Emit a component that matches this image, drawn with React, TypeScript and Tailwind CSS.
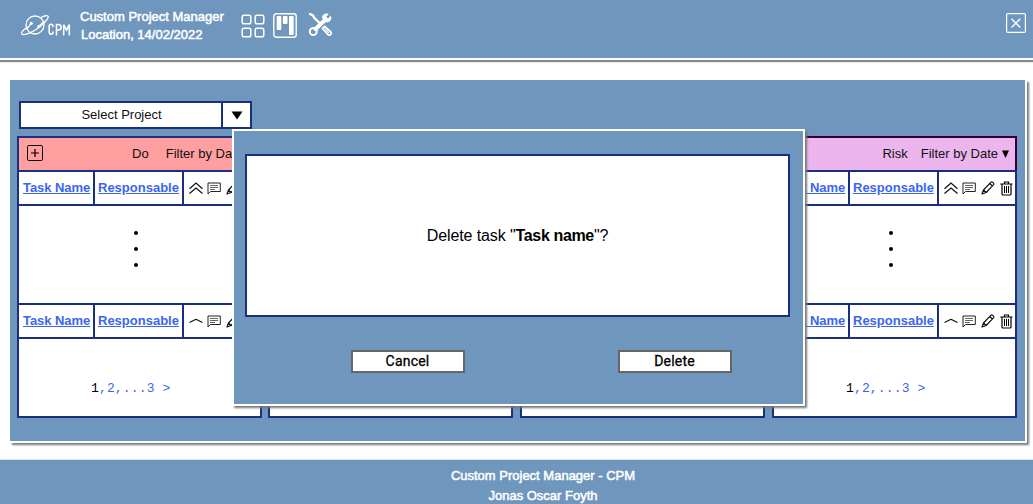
import React from "react";

function Logo() {
  return (
    <svg width="52" height="24" viewBox="0 0 52 24" fill="none" stroke="white" strokeWidth="1.3" strokeLinecap="round">
      <circle cx="15" cy="12" r="9" />
      <path d="M21 4.500 C24 2.800 28 1.800 28.300 3.700 C28.600 6 22.500 12 16.500 16.200 C10.500 20.400 2.500 23 1.700 20.800 C1.200 19.200 3.500 16.800 6.500 14.700" />
      <path d="M7 15.500 L11 10.700 M19.300 13 L24 8.500" />
      <circle cx="11.300" cy="10.300" r="1.600" fill="white" stroke="none" />
      <circle cx="19" cy="13.300" r="1.600" fill="white" stroke="none" />
      <path d="M33 13.500 C33 10.500 29.200 10.500 29.200 13.500 V19 C29.200 22 33 22 33 19 M36.500 21.700 V11.500 H38.500 C42 11.500 42 17 38.500 17 H36.500 M43.700 21.700 V11.700 L46.500 17 L49.300 11.700 V21.700" strokeWidth="1.600" />
    </svg>
  );
}

function GridIcon() {
  return (
    <svg width="24" height="24" viewBox="0 0 24 24" fill="none" stroke="white" strokeWidth="1.500">
      <rect x="1.200" y="1.200" width="8.600" height="8.600" rx="1.800" />
      <rect x="14.200" y="1.200" width="8.600" height="8.600" rx="1.800" />
      <rect x="1.200" y="14.200" width="8.600" height="8.600" rx="1.800" />
      <rect x="14.200" y="14.200" width="8.600" height="8.600" rx="1.800" />
    </svg>
  );
}

function BoardIcon() {
  return (
    <svg width="24" height="25" viewBox="0 0 24 25" fill="none">
      <rect x="0.800" y="0.800" width="22.400" height="23.400" rx="2.500" stroke="white" strokeWidth="1.400" />
      <rect x="3.700" y="3" width="4.600" height="14" rx="1" fill="white" />
      <rect x="9.900" y="3" width="4.600" height="8" rx="1" fill="white" />
      <rect x="16" y="3" width="4.700" height="19" rx="1" fill="white" />
    </svg>
  );
}

function ToolsIcon() {
  return (
    <svg width="25" height="25" viewBox="0 0 25 25" fill="none" stroke="white" strokeLinecap="round">
      <path d="M2 2 L5 3.500 L6 5.500 L13 12.500" strokeWidth="2.400" />
      <path d="M7.500 17 L17 8" strokeWidth="4" />
      <path d="M22.500 4.700 L20 7 L17.600 5 L20.200 2.300 C17 1 14 3 14.700 6.200 L17.500 9.700 C21.500 10.700 24 7.500 22.500 4.700 Z" fill="white" strokeWidth="1" strokeLinejoin="round" />
      <circle cx="5.300" cy="19.500" r="3.500" strokeWidth="2" />
      <path d="M14.500 16.500 L16.700 14.500 L22.500 19.700 C24.500 21.700 21.800 24.300 19.800 22.300 Z" strokeWidth="1.800" strokeLinejoin="round" />
      <path d="M17.300 17.200 L20.700 20.600" strokeWidth="1.200" />
    </svg>
  );
}

function CloseIcon() {
  return (
    <svg width="20" height="20" viewBox="0 0 20 20" fill="none" stroke="white">
      <rect x="0.600" y="0.600" width="18.800" height="18.800" rx="1.500" strokeWidth="1.200" />
      <path d="M5.500 5.700 L14.300 14.500 M14.300 5.700 L5.500 14.500" strokeWidth="1.400" />
    </svg>
  );
}

function PlusIcon() {
  return (
    <svg width="16" height="16" viewBox="0 0 16 16" fill="none" stroke="black">
      <rect x="0.500" y="0.500" width="15" height="15" rx="1.200" strokeWidth="1" />
      <path d="M8 4 V12 M4 8 H12" strokeWidth="1.200" />
    </svg>
  );
}

function PriorityIcon({ double }: { double: boolean }) {
  return (
    <svg width="14" height="14" viewBox="0 0 14 14" fill="none" stroke="#111" strokeWidth="1.2">
      {double ? <path d="M0.500 7.700 L7 2 L13.500 7.700 M0.500 12.500 L7 7 L13.500 12.500" /> : <path d="M0.500 8.500 L6 5.700 Q7 5.200 8 5.700 L13.500 8.500" />}
    </svg>
  );
}

function CommentIcon() {
  return (
    <svg width="14" height="13" viewBox="0 0 14 13" fill="none" stroke="#222" strokeWidth="1">
      <path d="M1 12 V1 H13.300 V9.500 H3.500 Z" strokeLinejoin="round" />
      <path d="M3 3.500 H11 M3 5.500 H11 M3 7.500 H8" strokeWidth="0.700" />
    </svg>
  );
}

function PencilIcon() {
  return (
    <svg width="14" height="14" viewBox="0 0 14 14" fill="none" stroke="#111" strokeWidth="1.200" strokeLinejoin="round">
      <path d="M1 13 L2.500 9 L10 1.200 C11 0.200 13.600 2.500 12.600 3.700 L5.200 11.500 Z M8.700 2.500 L11.300 5 M2.500 9 L5.200 11.500" />
    </svg>
  );
}

function TrashIcon() {
  return (
    <svg width="13" height="15" viewBox="0 0 13 15" fill="none" stroke="black" strokeWidth="1.2">
      <path d="M0.300 3 H12.500 M4.500 2.800 V1 H8.500 V2.800 M2 3 V13 Q2 14 3 14 H10 Q11 14 11 13 V3" />
      <path d="M4.500 5 V12 M6.500 5 V12 M8.500 5 V12" strokeWidth="1" />
    </svg>
  );
}

function TaskRow({ double }: { double: boolean }) {
  return (
    <div className="flex h-9 shrink-0 border-y-2 border-[#1a2f7d]">
      <div className="w-[76px] shrink-0 border-r-2 border-[#1a2f7d] pl-1 pt-[7px]">
        <a className="whitespace-nowrap font-bold tracking-[-0.05px] text-[#3a66f0] underline">Task Name</a>
      </div>
      <div className="w-[89px] shrink-0 border-r-2 border-[#1a2f7d] pl-[3px] pt-[7px]">
        <a className="font-bold text-[#3a66f0] underline">Responsable</a>
      </div>
      <div className="flex items-center pl-[5px]">
        <PriorityIcon double={double} />
        <div className="ml-[3.500px]"><CommentIcon /></div>
        <div className="ml-[5px]"><PencilIcon /></div>
        <div className="ml-[5px]"><TrashIcon /></div>
      </div>
    </div>
  );
}

type ColumnProps = { title: string; tone: string; add?: boolean; gap: string };

function Column({ title, tone, add, gap }: ColumnProps) {
  return (
    <section className={`flex h-[282px] w-[245px] shrink-0 flex-col bg-white ${gap}`}>
      <div className={`flex h-[34px] shrink-0 items-center border-x-2 border-t-2 pl-2 pr-[6px] ${tone}`}>
        {add && <div className="mb-[2px]"><PlusIcon /></div>}
        <span className="ml-auto">{title}</span>
        <span className={add ? "ml-[17px]" : "ml-[13px]"}>Filter by Date</span>
        <svg className="ml-1" width="7" height="8" viewBox="0 0 7 8"><path d="M0 0.500 H7 L3.500 8 Z" /></svg>
      </div>
      <div className="flex min-h-0 grow flex-col border-x-2 border-b-2 border-[#1a2f7d]">
        <TaskRow double />
        <div className="flex h-[97px] shrink-0 flex-col items-center gap-3 pr-[7px] pt-[25px]">
          <i className="size-1 rounded-full bg-black" />
          <i className="size-1 rounded-full bg-black" />
          <i className="size-1 rounded-full bg-black" />
        </div>
        <TaskRow double={false} />
        <div className="pl-[72px] pt-[42px] font-['Liberation_Mono',monospace] text-[13px] leading-[16px] tracking-[0.15px] text-[#3a66f0]">
          <span className="text-black">1</span>,2,...3 &gt;
        </div>
      </div>
    </section>
  );
}

function DialogButton({ label }: { label: string }) {
  return (
    <button className="h-[23px] w-[114px] border-2 border-[#666] bg-white pr-px font-[Roboto,sans-serif] text-[14px] font-normal leading-[19px] tracking-[0.2px] text-black [-webkit-text-stroke:0.3px_black]">
      {label}
    </button>
  );
}

export default function App() {
  return (
    <div className="relative flex h-[504px] w-[1033px] flex-col overflow-hidden bg-white font-['Liberation_Sans',sans-serif] text-[13px] leading-[18px] text-[#111]">
      <header className="flex h-[60px] shrink-0 border-b-2 border-white bg-[#6f96bd] pl-5 pr-[7px] shadow-[0_2px_1px_#888]">
        <div className="mt-[13px] w-[60px]"><Logo /></div>
        <div className="mt-2 w-[161px] whitespace-nowrap text-[13px] text-white [-webkit-text-stroke:0.5px_white]">
          <div>Custom Project Manager</div>
          <div className="pl-px">Location, 14/02/2022</div>
        </div>
        <div className="mt-[14px]"><GridIcon /></div>
        <div className="ml-2 mt-[13px]"><BoardIcon /></div>
        <div className="ml-[11px] mt-3"><ToolsIcon /></div>
        <div className="ml-auto mt-[13px]"><CloseIcon /></div>
      </header>

      <main className="ml-[10px] mt-5 h-[363px] w-[1017px] shrink-0 border-b-2 border-r-2 border-white bg-[#6f96bd] pl-[7px] pt-[21px] shadow-[2px_2px_2px_#777]">
        <div className="ml-[2px] flex h-[28px] w-[233px] border-2 border-[#1a2f7d] bg-white">
          <div className="w-[202px] border-r-2 border-[#1a2f7d] pl-px pt-[3px] text-center">Select Project</div>
          <div className="flex grow items-center justify-center">
            <svg width="12" height="9" viewBox="0 0 12 9"><path d="M0.500 0.500 H11.500 L6 8.500 Z" /></svg>
          </div>
        </div>
        <div className="mt-[7px] flex">
          <Column title="Do" tone="border-[#1a2f7d] bg-[#ff9f9f]" add gap="" />
          <Column title="Doing" tone="border-[#1a2f7d] bg-[#ffe599]" gap="ml-[6px]" />
          <Column title="Done" tone="border-[#1a2f7d] bg-[#b9e0a5]" gap="ml-[7px]" />
          <Column title="Risk" tone="border-[#330033] bg-[#edb5ed]" gap="ml-[7px]" />
        </div>
      </main>

      <footer className="mt-4 grow border-t border-[#d5e1ed] bg-[#6f96bd] pl-[53px] pt-[6px] text-center text-[13px] leading-5 text-white [-webkit-text-stroke:0.5px_white]">
        <div>Custom Project Manager - CPM</div>
        <div>Jonas Oscar Foyth</div>
      </footer>

      <div role="dialog" className="absolute left-[232px] top-[129px] h-[277px] w-[573px] border-2 border-white bg-[#6f96bd] px-[11px] pt-[23px] shadow-[2px_2px_2px_#777]">
        <div className="flex h-[163px] w-[545px] items-center justify-center border-2 border-[#1a2f7d] bg-white text-[16px] tracking-[-0.1px] text-black">
          <p>Delete task "<b className="tracking-[-0.35px]">Task name</b>"?</p>
        </div>
        <div className="mt-[33px] flex justify-between pl-[106px] pr-[60px]">
          <DialogButton label="Cancel" />
          <DialogButton label="Delete" />
        </div>
      </div>
    </div>
  );
}
